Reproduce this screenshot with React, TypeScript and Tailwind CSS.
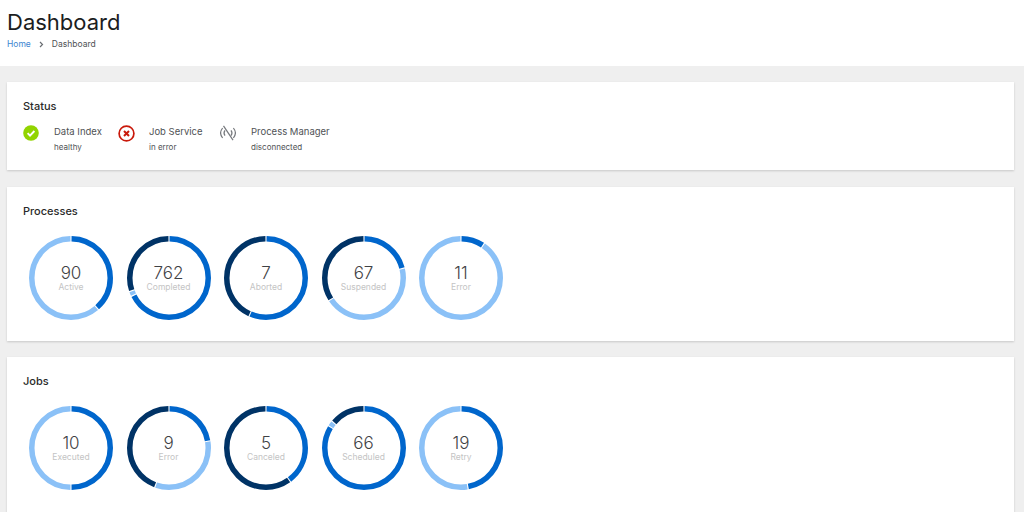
const font = "font-['Inter','Liberation_Sans',sans-serif]";

type Seg = { color: string; to: number };
const BLUE = "#0066cc";
const LIGHT = "#8bc1f7";
const DARK = "#003366";

function Donut({ value, label, segs }: { value: string; label: string; segs: Seg[] }) {
  const r = 39.25;
  let from = 0;
  return (
    <div className="relative h-[86px] w-[86px]">
      <svg width="86" height="86" viewBox="0 0 86 86">
        <g transform="rotate(-90 43 43)">
          {segs.map((s, i) => {
            const start = from;
            from = s.to;
            const len = Math.max(s.to - start - 1.6, 0.5);
            return (
              <circle
                key={i}
                cx="43"
                cy="43"
                r={r}
                fill="none"
                stroke={s.color}
                strokeWidth="5.5"
                pathLength={360}
                strokeDasharray={`${len} ${360 - len}`}
                strokeDashoffset={-(start + 0.8)}
              />
            );
          })}
        </g>
      </svg>
      <div className="absolute inset-0 flex flex-col items-center justify-center">
        <div className="text-[17px] font-light leading-[20px] text-[#3f4245]">{value}</div>
        <div className="mt-[-2px] text-[8.5px] leading-[12px] text-[#c4c4c4]">{label}</div>
      </div>
    </div>
  );
}

function Card({ title, className, children }: { title: string; className: string; children: React.ReactNode }) {
  return (
    <section className={`bg-white px-4 shadow-[0_1px_2px_rgba(0,0,0,0.16)] ${className}`}>
      <h2 className="text-[11px] font-medium leading-[14px] text-[#2a2a2a]">{title}</h2>
      {children}
    </section>
  );
}

function StatusItem({ icon, name, sub, width }: { icon: React.ReactNode; name: string; sub: string; width: string }) {
  return (
    <div className={`flex items-start ${width}`}>
      <div className="flex h-[16px] w-[16px] items-center justify-center">{icon}</div>
      <div className="ml-[15px]">
        <div className="whitespace-nowrap text-[9.5px] leading-[14px] text-[#4f5255]">{name}</div>
        <div className="mt-[2px] whitespace-nowrap text-[8px] leading-[12px] text-[#4f5255]">{sub}</div>
      </div>
    </div>
  );
}

const processes = [
  { value: "90", label: "Active", segs: [{ color: BLUE, to: 139 }, { color: LIGHT, to: 360 }] },
  { value: "762", label: "Completed", segs: [{ color: BLUE, to: 244 }, { color: LIGHT, to: 251 }, { color: DARK, to: 360 }] },
  { value: "7", label: "Aborted", segs: [{ color: BLUE, to: 204 }, { color: DARK, to: 360 }] },
  { value: "67", label: "Suspended", segs: [{ color: BLUE, to: 76 }, { color: LIGHT, to: 237 }, { color: DARK, to: 360 }] },
  { value: "11", label: "Error", segs: [{ color: BLUE, to: 34 }, { color: LIGHT, to: 360 }] },
];

const jobs = [
  { value: "10", label: "Executed", segs: [{ color: BLUE, to: 180 }, { color: LIGHT, to: 360 }] },
  { value: "9", label: "Error", segs: [{ color: BLUE, to: 80 }, { color: LIGHT, to: 200 }, { color: DARK, to: 360 }] },
  { value: "5", label: "Canceled", segs: [{ color: BLUE, to: 144 }, { color: DARK, to: 360 }] },
  { value: "66", label: "Scheduled", segs: [{ color: BLUE, to: 302 }, { color: LIGHT, to: 310 }, { color: DARK, to: 360 }] },
  { value: "19", label: "Retry", segs: [{ color: BLUE, to: 170 }, { color: LIGHT, to: 360 }] },
];

function Row({ items }: { items: typeof processes }) {
  return (
    <div className="mt-[17px] flex gap-[11.5px] pl-[5px]">
      {items.map((d) => (
        <Donut key={d.label} {...d} />
      ))}
    </div>
  );
}

export default function App() {
  return (
    <div className={`h-[512px] w-[1024px] overflow-hidden bg-[#efefef] ${font}`}>
      <header className="h-[66px] bg-white pl-[7px] pt-[9px]">
        <h1 className="text-[22px] font-normal leading-[26px] text-[#1b1d21]">Dashboard</h1>
        <nav className="mt-[3px] flex items-center text-[8.5px] leading-[12px]">
          <span className="text-[#3d86d0]">Home</span>
          <svg className="ml-[8px] mr-[8px]" width="5" height="7" viewBox="0 0 5 7">
            <path d="M1 1l2.5 2.5L1 6" fill="none" stroke="#6a6e73" strokeWidth="1.2" />
          </svg>
          <span className="text-[#4f5255]">Dashboard</span>
        </nav>
      </header>
      <main className="flex flex-col pl-[7px] pr-[10px] pt-[16px]">
        <Card title="Status" className="h-[88px] pt-[17px]">
          <div className="mt-[12px] flex">
            <StatusItem
              width="w-[95px]"
              name="Data Index"
              sub="healthy"
              icon={
                <svg className="shrink-0" width="16" height="16" viewBox="0 0 16 16">
                  <circle cx="8" cy="8" r="7.8" fill="#92d400" />
                  <path d="M4.6 8.2l2.4 2.4 4.4-4.6" fill="none" stroke="#fff" strokeWidth="1.9" />
                </svg>
              }
            />
            <StatusItem
              width="w-[102px]"
              name="Job Service"
              sub="in error"
              icon={
                <svg className="shrink-0" width="17" height="17" viewBox="0 0 17 17">
                  <circle cx="8.5" cy="8.5" r="7.4" fill="#fff" stroke="#c9190b" strokeWidth="1.7" />
                  <path d="M6 6l5 5M11 6l-5 5" stroke="#c9190b" strokeWidth="2" />
                </svg>
              }
            />
            <StatusItem
              width="w-[120px]"
              name="Process Manager"
              sub="disconnected"
              icon={
                <svg className="shrink-0" width="16" height="16" viewBox="0 0 16 16" fill="none" stroke="#75787c" strokeWidth="1.2">
                  <path d="M3.5 .8l9.5 14.4" />
                  <path d="M2.6 3C.2 6 .2 10 2.6 13M13.4 3c2.4 3 2.4 7 0 10" />
                  <path d="M5 5.4C3.8 7 3.8 9 5 10.6M11 5.4c1.2 1.6 1.2 3.6 0 5.2" />
                </svg>
              }
            />
          </div>
        </Card>
        <Card title="Processes" className="mt-[17px] h-[154px] pt-[17px]">
          <Row items={processes} />
        </Card>
        <Card title="Jobs" className="mt-[16px] h-[170px] pt-[17px]">
          <Row items={jobs} />
        </Card>
      </main>
    </div>
  );
}
